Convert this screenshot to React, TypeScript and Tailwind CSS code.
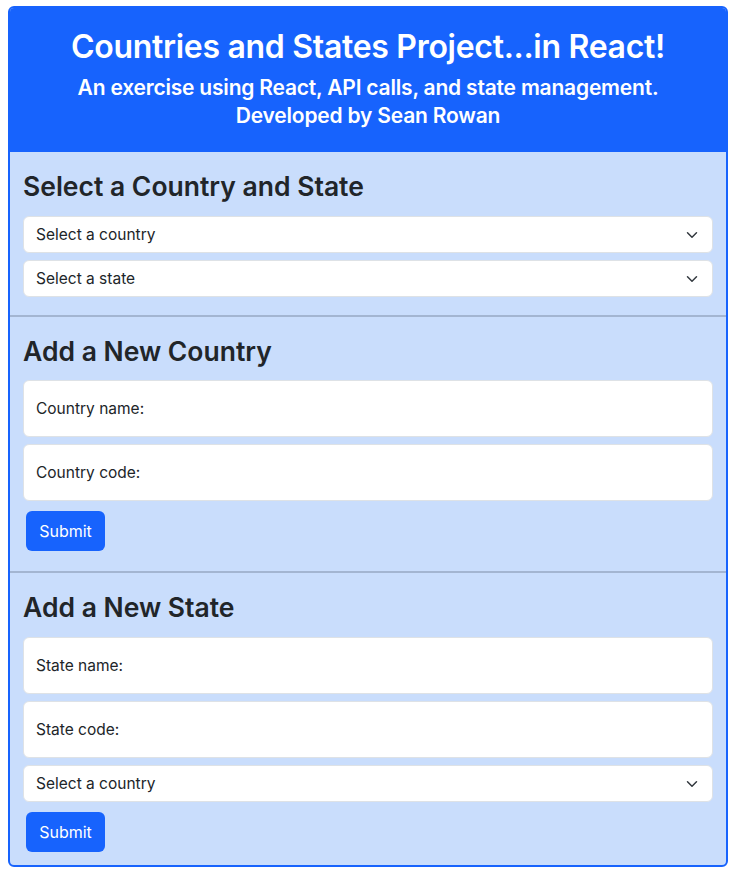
import { ChevronDown } from 'lucide-react';

function SelectBox({ label }: { label: string }) {
  return (
    <div className="flex items-center justify-between h-[37px] bg-white border border-[#dee2e6] rounded-[6px] pl-3 pr-[11px] text-[15.5px] text-[#212529]">
      <span>{label}</span>
      <ChevronDown size={18} strokeWidth={2} className="text-[#343a40]" />
    </div>
  );
}

function FloatingInput({ label }: { label: string }) {
  return (
    <div className="flex items-center h-[57px] bg-white border border-[#dee2e6] rounded-[6px] px-3 text-[15.5px] text-[#212529]">
      <span>{label}</span>
    </div>
  );
}

function SubmitButton() {
  return (
    <button className="ml-[3px] w-[79px] h-[40px] bg-[#1763fd] text-white rounded-[6px] text-[16px]">
      Submit
    </button>
  );
}

export default function App() {
  return (
    <div className="min-h-screen bg-white pt-[6px] px-[8px] font-['Inter',sans-serif]">
      <div className="w-[720px] border-2 border-[#1763fd] rounded-[6px] overflow-hidden bg-[#c9ddfc]">
        <div className="bg-[#1763fd] text-white text-center pt-[20px] pb-[22px]">
          <h1 className="text-[32px] font-semibold leading-[38px] tracking-[-0.3px]">Countries and States Project...in React!</h1>
          <p className="mt-[8px] text-[21px] font-semibold leading-[28px] tracking-[-0.2px]">
            An exercise using React, API calls, and state management.
            <br />
            Developed by Sean Rowan
          </p>
        </div>

        <div className="px-[13px] pt-[19px] pb-[18px] border-b-2 border-[#a3b5d1]">
          <h2 className="text-[26.5px] font-semibold leading-[31px] text-[#212529] mb-[14px]">Select a Country and State</h2>
          <div className="flex flex-col gap-[7px]">
            <SelectBox label="Select a country" />
            <SelectBox label="Select a state" />
          </div>
        </div>

        <div className="px-[13px] pt-[19px] pb-[20px] border-b-2 border-[#a3b5d1]">
          <h2 className="text-[26.5px] font-semibold leading-[31px] text-[#212529] mb-[13px]">Add a New Country</h2>
          <div className="flex flex-col gap-[7px]">
            <FloatingInput label="Country name:" />
            <FloatingInput label="Country code:" />
          </div>
          <div className="mt-[10px]">
            <SubmitButton />
          </div>
        </div>

        <div className="px-[13px] pt-[19px] pb-[13px]">
          <h2 className="text-[26.5px] font-semibold leading-[31px] text-[#212529] mb-[14px]">Add a New State</h2>
          <div className="flex flex-col gap-[7px]">
            <FloatingInput label="State name:" />
            <FloatingInput label="State code:" />
            <SelectBox label="Select a country" />
          </div>
          <div className="mt-[10px]">
            <SubmitButton />
          </div>
        </div>
      </div>
    </div>
  );
}
